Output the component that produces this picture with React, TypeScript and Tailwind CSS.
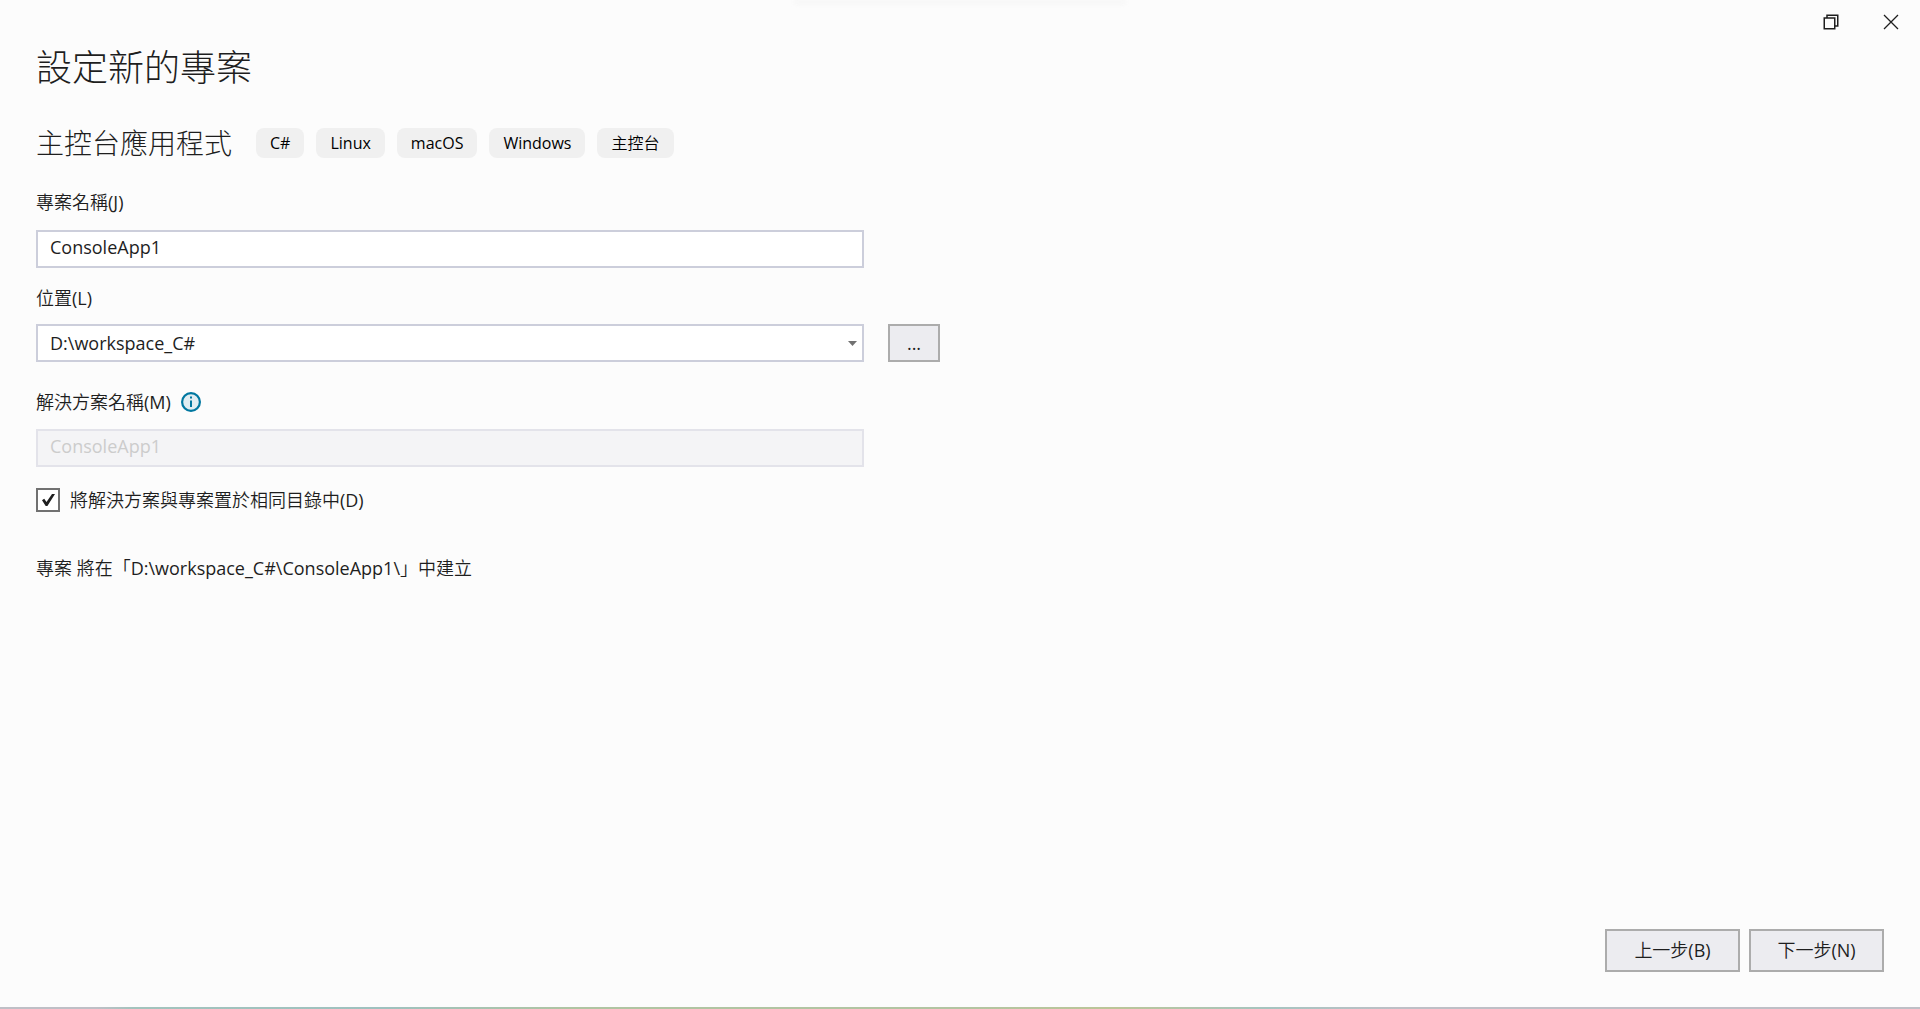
import { useState } from 'react';

const TAGS = ['C#', 'Linux', 'macOS', 'Windows', '主控台'];

interface WizardButtonProps {
  label: string;
}

function WizardButton({ label }: WizardButtonProps) {
  return (
    <button type="button" className="h-[43px] w-[135px] border-2 border-[#acacac] bg-[#ececf0] pb-0.5 text-lg leading-none">
      {label}
    </button>
  );
}

// Restore / close buttons of the window
function WindowControls() {
  return (
    <div className="flex h-11 items-center justify-end gap-11 pr-[21px]">
      <button type="button" aria-label="還原">
        <svg width="16" height="16" viewBox="0 0 16 16" fill="none" stroke="#1e1e1e" strokeWidth="1.5">
          <path d="M4 4V1.25h10.75V12H12" />
          <path d="M1.25 4h10.5v10.75H1.25z" />
        </svg>
      </button>
      <button type="button" aria-label="關閉">
        <svg width="16" height="16" viewBox="0 0 16 16" fill="none" stroke="#1e1e1e" strokeWidth="1.3">
          <path d="M1 1l14 14M15 1L1 15" />
        </svg>
      </button>
    </div>
  );
}

function InfoIcon() {
  return (
    <svg width="20" height="20" viewBox="0 0 20 20" aria-hidden="true">
      <circle cx="10" cy="10" r="8.9" fill="#e0edf2" stroke="#0077a0" strokeWidth="2.2" />
      <path d="M9 4.5h2v2H9zM9 8.5h2V15H9z" fill="#0077a0" />
    </svg>
  );
}

export default function App() {
  const [name, setName] = useState('ConsoleApp1');
  const [location, setLocation] = useState('D:\\workspace_C#');
  const [sameDir, setSameDir] = useState(true);

  return (
    <div className="relative flex min-h-screen flex-col bg-[#fcfcfc] font-['Open_Sans','Noto_Sans_CJK_TC_DemiLight','Noto_Sans_CJK_TC',sans-serif] text-lg leading-6 text-[#1e1e1e]">
      {/* Soft shadow at the top edge */}
      <div className="absolute top-0 left-1/2 h-1 w-[330px] -translate-x-1/2 bg-[#f5f5f5] blur-[2px]" />
      <WindowControls />

      <main className="flex flex-1 flex-col px-9">
        <h1 className="font-['Open_Sans','Noto_Sans_CJK_TC',sans-serif] text-4xl leading-12 font-light">設定新的專案</h1>

        <div className="mt-[34px] flex items-center gap-6">
          <h2 className="font-['Open_Sans','Noto_Sans_CJK_TC',sans-serif] text-[28px] leading-[34px] font-light">
            主控台應用程式
          </h2>
          <ul className="flex gap-3">
            {TAGS.map(tag => (
              <li key={tag} className="rounded-lg bg-[#f0f0f0] px-3.5 text-base leading-[30px] text-black">
                {tag}
              </li>
            ))}
          </ul>
        </div>

        <label htmlFor="project-name" className="mt-[30px] self-start">
          專案名稱(J)
        </label>
        <input
          id="project-name"
          value={name}
          onChange={e => setName(e.target.value)}
          className="mt-4 h-[38px] w-full max-w-[828px] border-2 border-[#cccedb] bg-white px-3 pb-1"
        />

        <label htmlFor="location" className="mt-[18px] self-start">
          位置(L)
        </label>
        <div className="mt-3.5 flex gap-6">
          <div className="relative w-full max-w-[828px]">
            <select
              id="location"
              value={location}
              onChange={e => setLocation(e.target.value)}
              className="block h-[38px] w-full appearance-none border-2 border-[#cccedb] bg-white px-3"
            >
              <option>D:\workspace_C#</option>
            </select>
            <svg width="9" height="5" viewBox="0 0 9 5" className="pointer-events-none absolute top-[17px] right-[7px]">
              <path d="M0 0h9L4.500 5z" fill="#717171" />
            </svg>
          </div>
          <button type="button" className="h-[38px] w-[52px] border-2 border-[#acacac] bg-[#ececf0]">
            ...
          </button>
        </div>

        <div className="mt-7 flex items-center gap-2.5">
          <label htmlFor="solution-name">解決方案名稱(M)</label>
          <InfoIcon />
        </div>
        <input
          id="solution-name"
          value={name}
          disabled
          className="mt-[15px] h-[38px] w-full max-w-[828px] border-2 border-[#e3e3ea] bg-[#f4f4f6] px-3 pb-1 text-[#cccccc]"
        />

        <label className="mt-[21px] flex items-center gap-2.5 self-start">
          <span className="relative size-6">
            <input
              type="checkbox"
              checked={sameDir}
              onChange={e => setSameDir(e.target.checked)}
              className="block size-6 appearance-none border-2 border-[#717171] bg-white"
            />
            {sameDir && (
              <svg width="24" height="24" viewBox="0 0 24 24" className="pointer-events-none absolute inset-0">
                <path d="M6 12.2l2.2-1.4 2.3 3.2L16 6h3l-7.6 12H9.7z" fill="#1e1e1e" />
              </svg>
            )}
          </span>
          將解決方案與專案置於相同目錄中(D)
        </label>

        <p className="mt-11">專案 將在「D:\workspace_C#\{name}\」中建立</p>
      </main>

      <footer className="flex justify-end gap-[9px] px-9 pb-[35px]">
        <WizardButton label="上一步(B)" />
        <WizardButton label="下一步(N)" />
      </footer>
      <div className="h-0.5 bg-[linear-gradient(to_right,#bfbfc6_5%,#a3c3bd_7%,#9fc1bf_20%,#b0c4a2_30%,#b3c4a2_50%,#bcc598_58%,#a6c4c0_66%,#bfbfc6_73%)]" />
    </div>
  );
}
